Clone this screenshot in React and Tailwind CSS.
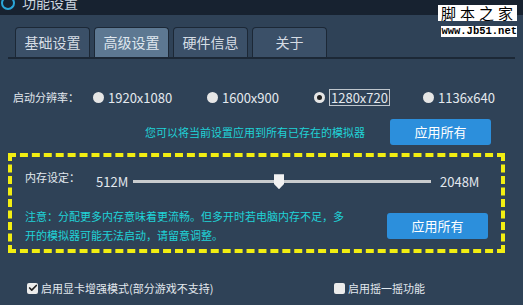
import { Check } from 'lucide-react'

const font = { fontFamily: '"Noto Sans CJK SC", "Liberation Sans", sans-serif' }

const Tab = ({ label, active }) => (
  <div
    className={`w-[75px] h-[30px] flex items-center justify-center rounded-t-[4px] border border-b-0 border-[#1c2836] text-[14px] ${
      active ? 'bg-[#5d7892] text-[#dfe7ef]' : 'bg-[#3b5068] text-[#d6dde5]'
    }`}
  >
    {label}
  </div>
)

const Radio = ({ label, checked }) => (
  <div className="flex items-center gap-[4px]">
    <div className="w-[11px] h-[11px] rounded-full bg-[#e6e6e6] flex items-center justify-center">
      {checked && <div className="w-[5px] h-[5px] rounded-full bg-[#222]" />}
    </div>
    <span
      className={`text-[13px] leading-[15px] text-[#e4e9ee] ${checked ? 'border border-[#bfc6cd] px-[1px]' : ''}`}
    >
      {label}
    </span>
  </div>
)

const ApplyButton = () => (
  <div className="w-[101px] h-[26px] rounded-[3px] bg-[#2c8fdc] text-white text-[13px] flex items-center justify-center">
    应用所有
  </div>
)

export default function App() {
  return (
    <div className="relative w-[523px] h-[305px] overflow-hidden bg-[#2f4257]" style={font}>
      {/* title bar */}
      <div className="h-[15px] bg-[#172230] flex items-start pl-[1px] gap-[7px] overflow-hidden">
        <div className="-mt-[4px] w-[14px] h-[14px] rounded-full border-2 border-[#2aa6d8] border-t-transparent" />
        <span className="-mt-[6px] text-[14px] leading-[16px] text-[#cfd8e0]">功能设置</span>
      </div>

      {/* watermark */}
      <div className="absolute right-[6px] top-[5px] flex flex-col items-end gap-[5px]">
        <div className="bg-white text-black text-[15px] leading-[16px] tracking-[4px] pl-[3px]">脚本之家</div>
        <div className="bg-white text-black text-[10.5px] leading-[11px] font-bold" style={{ fontFamily: '"Liberation Mono", monospace' }}>
          www.Jb51.net
        </div>
      </div>

      {/* tabs */}
      <div className="mt-[12px] mx-[8px] border-b-2 border-[#1c2836] flex gap-[4px] pl-[7px]">
        <Tab label="基础设置" />
        <Tab label="高级设置" active />
        <Tab label="硬件信息" />
        <Tab label="关于" />
      </div>

      {/* resolution */}
      <div className="mt-[30px] h-[16px] flex items-center pl-[13px]">
        <span className="w-[80px] text-[11px] text-[#e2e8ee]">启动分辨率：</span>
        <div className="w-[114px]"><Radio label="1920x1080" /></div>
        <div className="w-[107px]"><Radio label="1600x900" /></div>
        <div className="w-[109px]"><Radio label="1280x720" checked /></div>
        <Radio label="1136x640" />
      </div>

      <div className="mt-[14px] flex items-center justify-end pr-[32px] gap-[25px]">
        <span className="text-[11px] text-[#1fd3d8]">您可以将当前设置应用到所有已存在的模拟器</span>
        <ApplyButton />
      </div>

      {/* memory box */}
      <div className="mt-[8px] ml-[8px] w-[497px] h-[100px] border-[4px] border-dashed border-[#f2ee12] px-[13px] pt-[15px]">
        <div className="flex items-center">
          <span className="w-[71px] text-[11px] text-[#e2e8ee] -mt-[10px]">内存设定：</span>
          <span className="w-[37px] text-[13px] text-[#e2e8ee]">512M</span>
          <div className="relative w-[298px] h-[3px] bg-[#c9ccce]">
            <div className="absolute left-[141px] -top-[6px] w-[10px] h-[15px] bg-[#f2f2f2] [clip-path:polygon(0_0,100%_0,100%_65%,50%_100%,0_65%)]" />
          </div>
          <span className="ml-[9px] text-[13px] text-[#e2e8ee]">2048M</span>
        </div>
        <div className="mt-[15px] flex items-center">
          <p className="w-[325px] text-[11px] leading-[19px] text-[#1fd3d8]">
            注意：分配更多内存意味着更流畅。但多开时若电脑内存不足，多开的模拟器可能无法启动，请留意调整。
          </p>
          <div className="ml-[40px]"><ApplyButton /></div>
        </div>
      </div>

      {/* checkboxes */}
      <div className="mt-[27px] flex items-center pl-[27px]">
        <div className="w-[307px] flex items-center gap-[3px]">
          <div className="w-[11px] h-[11px] rounded-[2px] bg-[#ececec] flex items-center justify-center">
            <Check className="w-[10px] h-[10px] text-[#222]" strokeWidth={4} />
          </div>
          <span className="text-[11px] text-[#e2e8ee]">启用显卡增强模式(部分游戏不支持)</span>
        </div>
        <div className="flex items-center gap-[3px]">
          <div className="w-[11px] h-[11px] rounded-[2px] bg-[#ececec]" />
          <span className="text-[11px] text-[#e2e8ee]">启用摇一摇功能</span>
        </div>
      </div>
    </div>
  )
}
